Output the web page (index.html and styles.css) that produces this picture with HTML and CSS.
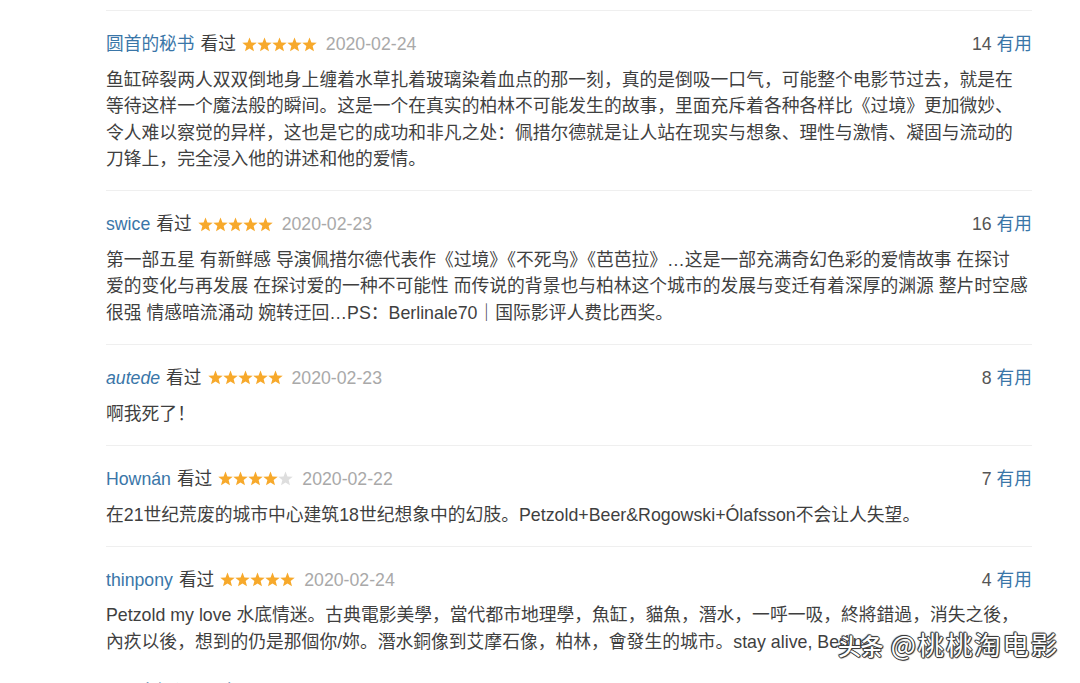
FILE: index.html
```html
<!DOCTYPE html>
<html lang="zh-CN">
<head>
<meta charset="utf-8">
<link rel="stylesheet" href="styles.css">
</head>
<body>
<svg class="defs" width="0" height="0" aria-hidden="true">
  <defs>
    <polygon id="star" points="7.5,0.5 9.44,5.43 14.73,5.75 10.64,9.12 11.97,14.25 7.5,11.4 3.03,14.25 4.36,9.12 0.27,5.75 5.56,5.43"/>
  </defs>
</svg>
<div class="page">
  <div class="comments">
    <div class="item">
      <div class="head">
        <div class="info">
          <a class="user">圆首的秘书</a><span class="seen">看过</span>
          <svg class="stars" width="75" height="15" viewBox="0 0 75 15"><use href="#star" x="0" class="on"/><use href="#star" x="15" class="on"/><use href="#star" x="30" class="on"/><use href="#star" x="45" class="on"/><use href="#star" x="60" class="on"/></svg>
          <span class="date">2020-02-24</span>
        </div>
        <div class="votes"><span class="count">14</span><a class="useful">有用</a></div>
      </div>
      <p class="body">鱼缸碎裂两人双双倒地身上缠着水草扎着玻璃染着血点的那一刻，真的是倒吸一口气，可能整个电影节过去，就是在<br>等待这样一个魔法般的瞬间。这是一个在真实的柏林不可能发生的故事，里面充斥着各种各样比《过境》更加微妙、<br>令人难以察觉的异样，这也是它的成功和非凡之处：佩措尔德就是让人站在现实与想象、理性与激情、凝固与流动的<br>刀锋上，完全浸入他的讲述和他的爱情。</p>
    </div>
    <div class="item">
      <div class="head">
        <div class="info">
          <a class="user">swice</a><span class="seen">看过</span>
          <svg class="stars" width="75" height="15" viewBox="0 0 75 15"><use href="#star" x="0" class="on"/><use href="#star" x="15" class="on"/><use href="#star" x="30" class="on"/><use href="#star" x="45" class="on"/><use href="#star" x="60" class="on"/></svg>
          <span class="date">2020-02-23</span>
        </div>
        <div class="votes"><span class="count">16</span><a class="useful">有用</a></div>
      </div>
      <p class="body">第一部五星 有新鲜感 导演佩措尔德代表作《过境》《不死鸟》《芭芭拉》…这是一部充满奇幻色彩的爱情故事 在探讨<br>爱的变化与再发展 在探讨爱的一种不可能性 而传说的背景也与柏林这个城市的发展与变迁有着深厚的渊源 整片时空感<br>很强 情感暗流涌动 婉转迂回…PS：Berlinale70｜国际影评人费比西奖。</p>
    </div>
    <div class="item">
      <div class="head">
        <div class="info">
          <a class="user italic">autede</a><span class="seen">看过</span>
          <svg class="stars" width="75" height="15" viewBox="0 0 75 15"><use href="#star" x="0" class="on"/><use href="#star" x="15" class="on"/><use href="#star" x="30" class="on"/><use href="#star" x="45" class="on"/><use href="#star" x="60" class="on"/></svg>
          <span class="date">2020-02-23</span>
        </div>
        <div class="votes"><span class="count">8</span><a class="useful">有用</a></div>
      </div>
      <p class="body">啊我死了！</p>
    </div>
    <div class="item">
      <div class="head">
        <div class="info">
          <a class="user">Hownán</a><span class="seen">看过</span>
          <svg class="stars" width="75" height="15" viewBox="0 0 75 15"><use href="#star" x="0" class="on"/><use href="#star" x="15" class="on"/><use href="#star" x="30" class="on"/><use href="#star" x="45" class="on"/><use href="#star" x="60" class="off"/></svg>
          <span class="date">2020-02-22</span>
        </div>
        <div class="votes"><span class="count">7</span><a class="useful">有用</a></div>
      </div>
      <p class="body">在21世纪荒废的城市中心建筑18世纪想象中的幻肢。Petzold+Beer&amp;Rogowski+Ólafsson不会让人失望。</p>
    </div>
    <div class="item last">
      <div class="head">
        <div class="info">
          <a class="user">thinpony</a><span class="seen">看过</span>
          <svg class="stars" width="75" height="15" viewBox="0 0 75 15"><use href="#star" x="0" class="on"/><use href="#star" x="15" class="on"/><use href="#star" x="30" class="on"/><use href="#star" x="45" class="on"/><use href="#star" x="60" class="on"/></svg>
          <span class="date">2020-02-24</span>
        </div>
        <div class="votes"><span class="count">4</span><a class="useful">有用</a></div>
      </div>
      <p class="body">Petzold my love 水底情迷。古典電影美學，當代都市地理學，魚缸，貓魚，潛水，一呼一吸，終將錯過，消失之後，<br>內疚以後，想到的仍是那個你/妳。潛水銅像到艾摩石像，柏林，會發生的城市。stay alive, Berlin.</p>
    </div>
    <a class="more">&gt; 更多短评 63 条</a>
  </div>
  <div class="watermark"><span class="wm-logo">头条</span> @桃桃淘电影</div>
</div>
</body>
</html>
```

FILE: styles.css
```css
html, body {
  margin: 0;
  padding: 0;
  background: #fff;
  overflow: hidden;
}

.defs {
  position: absolute;
  width: 0;
  height: 0;
}

.page {
  position: relative;
  width: 1080px;
  height: 683px;
  overflow: hidden;
  font-family: "Liberation Sans", "Noto Sans CJK SC", sans-serif;
  font-size: 17.8px;
  color: #494949;
}

.comments {
  margin-left: 106px;
  width: 926px;
  padding-top: 10px;
}

.item {
  border-top: 1px solid #efefef;
  padding: 20px 0 17.7px;
}

.head {
  display: flex;
  justify-content: space-between;
  align-items: center;
  height: 26px;
  line-height: 26px;
  margin-bottom: 9.8px;
  font-size: 17.7px;
}

.info {
  display: flex;
  align-items: center;
}

.user {
  color: #3a76a8;
}

.user.italic {
  font-style: italic;
}

.seen {
  margin-left: 6px;
  color: #3d3d3d;
}

.stars {
  margin-left: 6px;
  display: block;
}

.stars .on {
  fill: #f7a92b;
}

.stars .off {
  fill: #dedede;
}

.date {
  margin-left: 9px;
  color: #a9a9a9;
}

.votes {
  display: flex;
  align-items: center;
}

.count {
  color: #555;
}

.useful {
  margin-left: 5px;
  color: #3a76a8;
}

.body {
  margin: 0;
  line-height: 26.4px;
  white-space: nowrap;
  color: #3f3f3f;
}

.more {
  display: block;
  margin-top: 6px;
  line-height: 26px;
  color: #3a76a8;
}

.watermark {
  position: absolute;
  left: 838px;
  top: 627px;
  font-family: "Noto Sans CJK SC", sans-serif;
  font-size: 26.5px;
  line-height: 34px;
  letter-spacing: 1.8px;
  color: #fff;
  white-space: nowrap;
  text-shadow: 1px 0 0 #3a3a3a, -1px 0 0 #3a3a3a, 0 1px 0 #3a3a3a, 0 -1px 0 #3a3a3a, 1px 1px 1px #3a3a3a, -1px -1px 1px #3a3a3a;
}

.wm-logo {
  font-size: 23px;
  font-weight: 500;
  letter-spacing: -0.5px;
}
```
